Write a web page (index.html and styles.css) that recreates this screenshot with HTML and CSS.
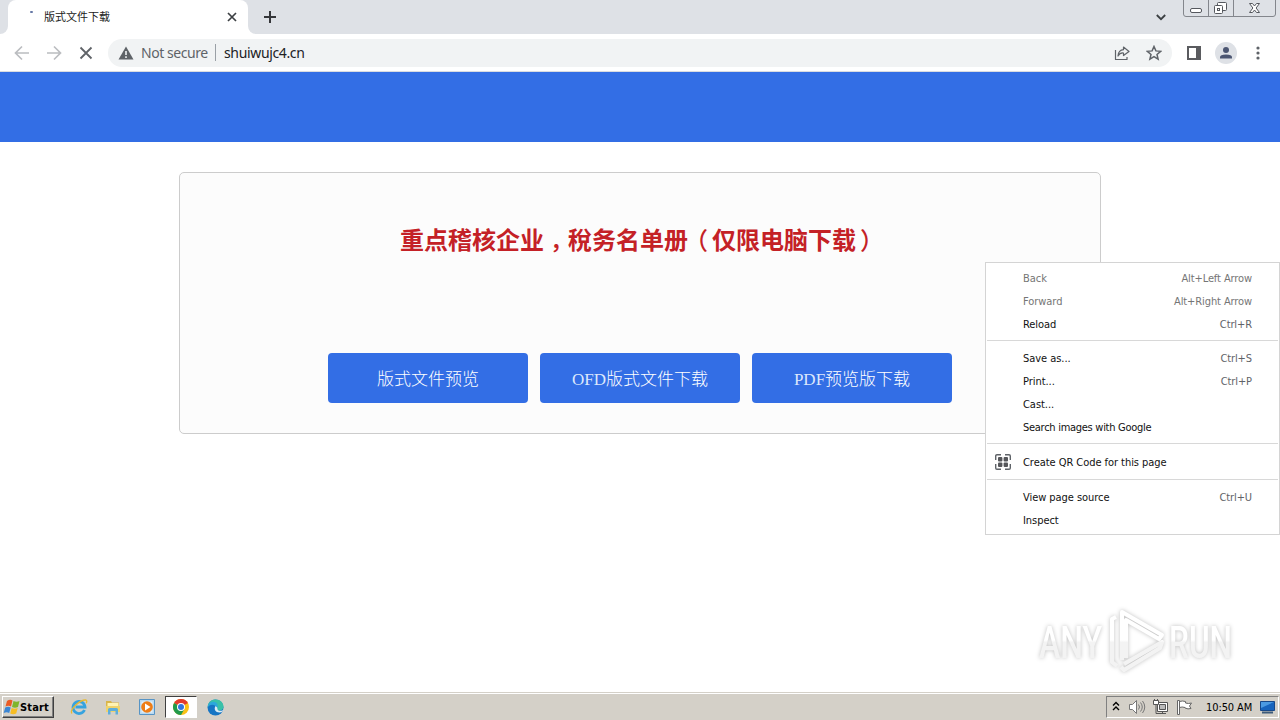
FILE: index.html
```html
<!DOCTYPE html>
<html lang="zh-CN">
    <head>
        <meta charset="UTF-8" />
        <meta name="viewport" content="width=device-width, initial-scale=1.0" />
        <title>版式文件下载</title>
        <link rel="stylesheet" href="styles.css">
    </head>

    <body>
        <div class="tabs">
            <div class="edge"></div>
            <div class="tab">
                <i class="dot"></i>
                <span class="tab-title">版式文件下载</span>
                <svg class="tab-close" width="10" height="10" viewBox="0 0 10 10"><path d="M1 1l8 8M9 1L1 9" stroke="#3c4043" stroke-width="1.7" /></svg>
            </div>
            <div class="edge-right"></div>
            <svg class="tab-add" width="12" height="12" viewBox="0 0 12 12"><path d="M6 0v12M0 6h12" stroke="#35363a" stroke-width="2" /></svg>
            <svg class="tab-more" width="10" height="7" viewBox="0 0 10 7"><path d="M.8 1L5 5.2 9.2 1" fill="none" stroke="#3c4043" stroke-width="1.8" /></svg>
            <svg class="win" width="94" height="18" viewBox="0 0 94 18">
                <path d="M.5 0v14q0 2.500 2.500 2.500h87q2.500 0 2.500-2.500V0M25.500 0v16M50.500 0v16" fill="none" stroke="#83868c" />
                <g fill="#fff" stroke="#55585e">
                    <rect x="7.500" y="8.500" width="11" height="4" rx="1.500" />
                    <rect x="34.500" y="2.500" width="9" height="8" rx="1" />
                    <rect x="31.500" y="5.500" width="8" height="8" rx="1" />
                    <rect x="34.500" y="8.500" width="2" height="2" />
                    <path d="M66.500 3.500h3l2 2.500 2-2.500h3l-3.400 4.500 3.400 4.500h-3l-2-2.500-2 2.500h-3l3.400-4.500z" />
                </g>
            </svg>
        </div>

        <div class="toolbar">
            <svg width="16" height="16" viewBox="0 0 16 16"><path d="M15 8H2M8 1.500L1.500 8 8 14.500" fill="none" stroke="#bbbdc0" stroke-width="1.700" /></svg>
            <svg width="16" height="16" viewBox="0 0 16 16"><path d="M1 8h13M8 1.500L14.500 8 8 14.500" fill="none" stroke="#bbbdc0" stroke-width="1.700" /></svg>
            <svg width="16" height="16" viewBox="0 0 16 16"><path d="M2.500 2.500l11 11M13.500 2.500l-11 11" stroke="#5f6368" stroke-width="1.800" /></svg>
            <div class="address">
                <svg width="16" height="14" viewBox="0 0 16 14"><path d="M8 .5L15.500 13.500H.5z" fill="#5f6368" /><path d="M8 5v4M8 10.200v1.800" stroke="#f1f3f4" stroke-width="1.600" /></svg>
                <span class="secure">Not secure</span>
                <i class="bar"></i>
                <span class="url">shuiwujc4.cn</span>
                <svg class="share" width="16" height="16" viewBox="0 0 16 16"><path d="M1.500 5v9.500h11.500V12M9.500 2L15 6.500l-5.500 4V8Q6 7.500 4 11 4.500 5 9.500 4.700z" fill="none" stroke="#5f6368" stroke-width="1.200" stroke-linejoin="round" /></svg>
                <svg width="16" height="16" viewBox="0 0 16 16"><path d="M8 1.500l1.900 4.400 4.800.4L11 9.500l1.100 4.700L8 11.700l-4.100 2.500L5 9.500 1.300 6.300l4.800-.4z" fill="none" stroke="#5f6368" stroke-width="1.500" /></svg>
            </div>
            <svg class="panel" width="14" height="14" viewBox="0 0 14 14"><path d="M1 1h12v12H1z" fill="none" stroke="#5a5b5f" stroke-width="2" /><path d="M9 1h4v12H9z" fill="#5a5b5f" /></svg>
            <svg class="user" width="22" height="22" viewBox="0 0 22 22"><circle cx="11" cy="11" r="11" fill="#dee1e6" /><circle cx="11" cy="8" r="3" fill="#4c5672" /><path d="M5 16.500v-1.300Q5 12.500 11 12.500t6 2.700v1.300z" fill="#4c5672" /></svg>
            <svg class="dots" width="4" height="14" viewBox="0 0 4 14" fill="#5f6368"><circle cx="2" cy="2" r="1.600" /><circle cx="2" cy="7" r="1.600" /><circle cx="2" cy="12" r="1.600" /></svg>
        </div>

        <div class="page">
            <div class="header"></div>
            <div class="box">
                <h2>重点稽核企业<span class="comma">，</span>稅务名单册<span class="left">（</span>仅限电脑下载<span class="right">）</span></h2>
                <div class="btns">
                    <a class="btn">版式文件预览</a>
                    <a class="btn"><span>OFD</span>版式文件下载</a>
                    <a class="btn"><span>PDF</span>预览版下载</a>
                </div>
            </div>
        </div>

        <div class="taskbar">
            <div class="start">
                <svg width="18" height="16" viewBox="0 0 18 16">
                    <path d="M4 2q3-2 5.500-.5L8 7.500Q5.500 6 2.500 7.500z" fill="#ea5b25" />
                    <path d="M10.500 2q3 1.500 6 0L15 8q-3 1.500-6 0z" fill="#7fb52c" />
                    <path d="M2.200 8.500q3-1.600 5.500 0l-1.500 5.500q-2.500-1.500-5.500 0z" fill="#3b86d4" />
                    <path d="M8.700 9q3 1.500 6 0l-1.500 5.500q-3 1.500-6 0z" fill="#f7bd23" />
                </svg>
                <b>Start</b>
            </div>
            <div class="task">
                <svg width="18" height="18" viewBox="0 0 18 18">
                    <path d="M14.500 12A6 6 0 1 1 15 9H5.500" fill="none" stroke="#36a3df" stroke-width="2.800" />
                    <path d="M2 15.500C-1 12 10 1.500 16 2q1.500.7.200 3.300" fill="none" stroke="#e9b92f" stroke-width="1.300" />
                </svg>
            </div>
            <div class="task">
                <svg width="18" height="18" viewBox="0 0 18 18">
                    <path d="M2 3h5l1 1.500h7V14H2z" fill="#d9b54a" /><path d="M3.500 5h11v5h-11z" fill="#fff3b3" />
                    <path d="M2 8h14v6H2z" fill="#efd36c" />
                    <path d="M4 16.500v-5q0-1.500 1.500-1.500h7q1.500 0 1.500 1.500v5h-2.500V13h-5v3.500z" fill="#5eaedb" />
                </svg>
            </div>
            <div class="task">
                <svg width="18" height="18" viewBox="0 0 18 18">
                    <path d="M1.500 1.500h15v15h-15z" fill="#b9d9f0" stroke="#5794c5" /><path d="M3.500 3.500h11v11h-11z" fill="#e2f0fa" />
                    <circle cx="9" cy="9" r="5.800" fill="#ee7d16" /><path d="M7 5.500L12.500 9 7 12.500z" fill="#fff" />
                </svg>
            </div>
            <div class="task active">
                <svg width="16" height="16" viewBox="0 0 16 16">
                    <circle cx="8" cy="8" r="8" fill="#fbc116" />
                    <path d="M8 8L1.070 4A8 8 0 0 1 14.930 4z" fill="#e33b2e" />
                    <path d="M1.070 4A8 8 0 0 0 8 16L11.500 10 8 8z" fill="#229a4c" />
                    <circle cx="8" cy="8" r="4" fill="#fff" /><circle cx="8" cy="8" r="3" fill="#3275df" />
                </svg>
            </div>
            <div class="task">
                <svg width="17" height="17" viewBox="0 0 17 17">
                    <circle cx="8.500" cy="8.500" r="8" fill="#1675c4" />
                    <path d="M.7 8C1 3 4.500.5 8.500.5c5 0 8 3.500 8 7 0 3-2.500 4-4.500 4-1.500 0-2.500-.5-2-1.500C11 7 9 5 6 5 3 5 1.500 6.500.7 8z" fill="#39c1a8" />
                    <path d="M.7 8C1.500 3 6 1.500 9 3.500 11 5 11 7 10 9 9 6 4 4 .7 8z" fill="#2ca8dc" />
                    <path d="M8.500 7c-2 3 0 6.500 4 6.500 2 0 3.500-1 4-2.500-1 .8-5.500 1.500-6-.8Q11 8.500 8.500 7z" fill="#dcecf5" />
                </svg>
            </div>
            <div class="tray">
                <svg class="up" width="8" height="11" viewBox="0 0 8 11"><path d="M1 4.500l3-3 3 3M1 9l3-3 3 3" fill="none" stroke="#000" stroke-width="1.400" /></svg>
                <svg class="sound" width="18" height="16" viewBox="0 0 18 16" fill="none" stroke="#777"><path d="M1.500 5.500h3l4-4v13l-4-4h-3z" fill="#fff" /><path d="M10.500 5.500q2 2.500 0 5M12.500 3.500q3.500 4.500 0 9M14.500 2q4.500 6 0 12" /></svg>
                <svg class="net" width="18" height="16" viewBox="0 0 18 16" stroke="#555"><path d="M5.500 3.500h10v9h-10z" fill="#fff" /><path d="M7.500 5.500h6v5h-6z" fill="#bbb" /><path d="M1.500 1.500h5v4h-5zM2.500 0v2M5.500 0v2" fill="#fff" /><path d="M4 6v8.500h10M10.500 12v2" fill="none" /></svg>
                <svg class="flag" width="18" height="16" viewBox="0 0 18 16" fill="#fff" stroke="#666"><path d="M1.500 1.500h2v14h-2zM3.500 2.500q3-1 6 0v1.500q3 1 6 0l-2 3 1.500 2.500q-3 1-6-.5V8.500q-3-1-5.500 0z" /></svg>
                <span>10:50 AM</span>
                <svg class="desk" width="15" height="13" viewBox="0 0 15 13"><path d="M.5.5h14v9H.5z" fill="#1764bd" stroke="#184888" /><path d="M1 1h13L1 7z" fill="#4b9ae2" /><path d="M2 11.500h11" stroke="#3d5b7a" stroke-width="2" /></svg>
            </div>
        </div>

        <svg class="logo" width="240" height="80" viewBox="0 0 240 80">
            <defs>
                <linearGradient id="fade" gradientUnits="userSpaceOnUse" x1="0" y1="10" x2="0" y2="70">
                    <stop offset="0.5" stop-color="#fff" />
                    <stop offset="0.54" stop-color="#f3f3f3" />
                </linearGradient>
            </defs>
            <g class="logo-text">
                <text x="19" y="58" textLength="63" lengthAdjust="spacingAndGlyphs">ANY</text>
                <text x="149" y="58" textLength="63" lengthAdjust="spacingAndGlyphs">RUN</text>
            </g>
            <g class="logo-mark">
                <path d="M96 17l-4 2v43l5 4" />
                <path d="M102 60V12l40 23-3 4-33-19v38" />
                <path d="M101 67l3 3 36-22 2-6-38 22" />
            </g>
        </svg>

        <!-- 右键菜单 -->
        <div class="menu">
            <div class="item off">Back<span>Alt+Left Arrow</span></div>
            <div class="item off">Forward<span>Alt+Right Arrow</span></div>
            <div class="item">Reload<span>Ctrl+R</span></div>
            <hr>
            <div class="item">Save as...<span>Ctrl+S</span></div>
            <div class="item">Print...<span>Ctrl+P</span></div>
            <div class="item">Cast...</div>
            <div class="item search">Search images with Google</div>
            <hr>
            <div class="item qr">
                <svg width="16" height="16" viewBox="0 0 16 16"><path d="M6 .7H2Q.7.7.7 2v4M10 .7h4q1.300 0 1.300 1.300v4M.7 10v4q0 1.300 1.300 1.300h4M15.300 10v4q0 1.300-1.300 1.300h-4" fill="none" stroke="#5f6368" stroke-width="1.400" /><g fill="#55565a"><rect x="3" y="3" width="4.400" height="4.400" rx="1" /><rect x="8.600" y="3" width="4.400" height="4.400" rx="1" /><rect x="3" y="8.600" width="4.400" height="4.400" rx="1" /><rect x="8.600" y="8.600" width="4.400" height="4.400" rx="1" /></g></svg>
                Create QR Code for this page
            </div>
            <hr>
            <div class="item">View page source<span>Ctrl+U</span></div>
            <div class="item">Inspect</div>
        </div>
    </body>
</html>
```
FILE: styles.css
```css
html,
body {
    overflow: hidden;
}

body,
h2 {
    margin: 0;
    padding: 0;
}

body {
    position: relative;
    display: flex;
    flex-direction: column;
    width: 1280px;
    height: 720px;
    background: #fff;
    font: 11px "DejaVu Sans Condensed", "DejaVu Sans", "Noto Sans CJK SC", sans-serif;
}

svg {
    display: block;
    flex: none;
}

/* 标签栏 */
.tabs {
    display: flex;
    height: 34px;
    background: #dee1e6;
}

.edge,
.edge-right {
    width: 8px;
    background: #fff;
}

.edge::before,
.edge-right::before {
    content: "";
    display: block;
    height: 34px;
    background: #dee1e6;
    border-radius: 0 0 8px 0;
}

.edge-right::before {
    border-radius: 0 0 0 8px;
}

.tab {
    display: flex;
    align-items: center;
    box-sizing: border-box;
    width: 240px;
    padding: 0 11px 0 22px;
    background: #fff;
    border-radius: 8px 8px 0 0;
}

.dot {
    width: 3px;
    height: 2px;
    margin: 0 11px 10px 0;
    background: #6678a6;
    border-radius: 1px;
}

.tab-title {
    flex: 1;
    color: #222;
    font: 11px/30px "Noto Sans CJK SC", sans-serif;
    padding-bottom: 2px;
}

.tab-add {
    margin: 11px 0 0 8px;
}

.tab-more {
    margin: 14px 17px 0 auto;
}

.win {
    margin-right: 3px;
}

/* 地址栏 */
.toolbar {
    display: flex;
    align-items: center;
    gap: 16px;
    box-sizing: border-box;
    height: 38px;
    padding: 0 20px 0 14px;
    border-bottom: 1px solid #dadce0;
}

.address {
    display: flex;
    align-items: center;
    box-sizing: border-box;
    width: 1064px;
    height: 28px;
    margin-left: -2px;
    padding: 0 10px;
    background: #f1f3f4;
    border-radius: 14px;
    font: 14px/28px "Noto Sans", sans-serif;
}

.secure {
    width: 68px;
    margin-left: 7px;
    color: #5f6368;
    letter-spacing: -0.45px;
    white-space: nowrap;
}

.bar {
    width: 1px;
    height: 17px;
    margin: 0 8px 0 6px;
    background: #9aa0a6;
}

.url {
    color: #202124;
    letter-spacing: -0.35px;
}

.share {
    margin: 0 16px 0 auto;
}

.panel {
    margin-left: -1px;
}

.user {
    margin-left: -2px;
}

.dots {
    margin-left: 3px;
}

.page {
    flex: 1;
}

.header {
    height: 70px;
    background: #336ee5;
}

.box {
    box-sizing: border-box;
    width: 922px;
    height: 262px;
    margin: 30px auto 0 179px;
    padding-top: 48px;
    background: #fcfcfc;
    border: 1px solid #ccc;
    border-radius: 5px;
    text-align: center;
}

.box h2 {
    height: 36px;
    color: #c42126;
    font: bold 24px/36px "Noto Sans CJK SC", sans-serif;
}

/* 标点半宽 */
.comma,
.left,
.right {
    font-weight: 500;
    font-feature-settings: "halt";
}

.comma {
    padding: 0 6px;
}

.left {
    padding: 0 4px 0 8px;
}

.right {
    padding: 0 8px 0 4px;
}

.btns {
    display: flex;
    justify-content: center;
    gap: 12px;
    margin-top: 96px;
}

.btn {
    width: 200px;
    height: 50px;
    color: #fff;
    background: #336ee5;
    border-radius: 4px;
    font: 300 17px/50px "Noto Sans CJK SC", sans-serif;
}

.btn span {
    color: #dce8fc;
    font-family: "Liberation Serif", serif;
}

/* 任务栏 */
.taskbar {
    display: flex;
    align-items: center;
    box-sizing: border-box;
    height: 28px;
    padding: 1px 1px 0 2px;
    background: #d4d0c8;
    border-top: 1px solid #d4d0c8;
    box-shadow: inset 0 1px #fff;
}

.start {
    display: flex;
    align-items: center;
    box-sizing: border-box;
    width: 52px;
    height: 22px;
    margin-right: 9px;
    border: 1px solid;
    border-color: #fff #404040 #404040 #fff;
    box-shadow: inset -1px -1px #808080;
}

.start b {
    margin-left: -1px;
    font-size: 11px;
    letter-spacing: 0.15px;
}

.task {
    display: flex;
    align-items: center;
    justify-content: center;
    box-sizing: border-box;
    width: 32px;
    height: 22px;
    margin-right: 2px;
}

.active {
    background: #fff;
    border: 1px solid;
    border-color: #404040 #fff #fff #404040;
}

.tray {
    display: flex;
    align-items: center;
    box-sizing: border-box;
    width: 173px;
    height: 22px;
    margin-left: auto;
    padding: 0 3px 0 5px;
    border: 1px solid;
    border-color: #808080 #fff #fff #808080;
}

.up {
    margin-bottom: 2px;
}

.sound {
    margin-left: 8px;
}

.net,
.flag {
    margin-left: 6px;
}

.tray span {
    margin-left: 12px;
    letter-spacing: -0.1px;
    white-space: nowrap;
}

.desk {
    margin-left: auto;
}

.logo {
    position: absolute;
    left: 1020px;
    top: 600px;
    overflow: visible;
    filter: drop-shadow(0 0 2px rgba(0, 0, 0, 0.25));
}

.logo-text {
    fill: url(#fade);
    font: 500 44px Roboto, sans-serif;
}

.logo-mark {
    fill: none;
    stroke: url(#fade);
    stroke-width: 4px;
    stroke-linejoin: round;
}

.menu {
    position: absolute;
    left: 985px;
    top: 262px;
    box-sizing: border-box;
    width: 295px;
    height: 273px;
    padding-top: 4px;
    background: #fff;
    border: 1px solid #d4d4d4;
}

.item {
    display: flex;
    align-items: center;
    justify-content: space-between;
    height: 23px;
    padding: 0 27px 0 37px;
    color: #111;
    letter-spacing: -0.05px;
}

.item span {
    color: #5f6368;
    letter-spacing: -0.1px;
}

.item.off,
.item.off span {
    color: #757575;
}

.item.search {
    letter-spacing: -0.28px;
}

.menu hr {
    height: 1px;
    margin: 4px 1px 6px;
    border: 0;
    background: #d8d8d8;
}

.item.qr {
    height: 25px;
    justify-content: flex-start;
    gap: 12px;
    padding-left: 9px;
}

.item.qr svg {
    margin-bottom: 2px;
}
```
